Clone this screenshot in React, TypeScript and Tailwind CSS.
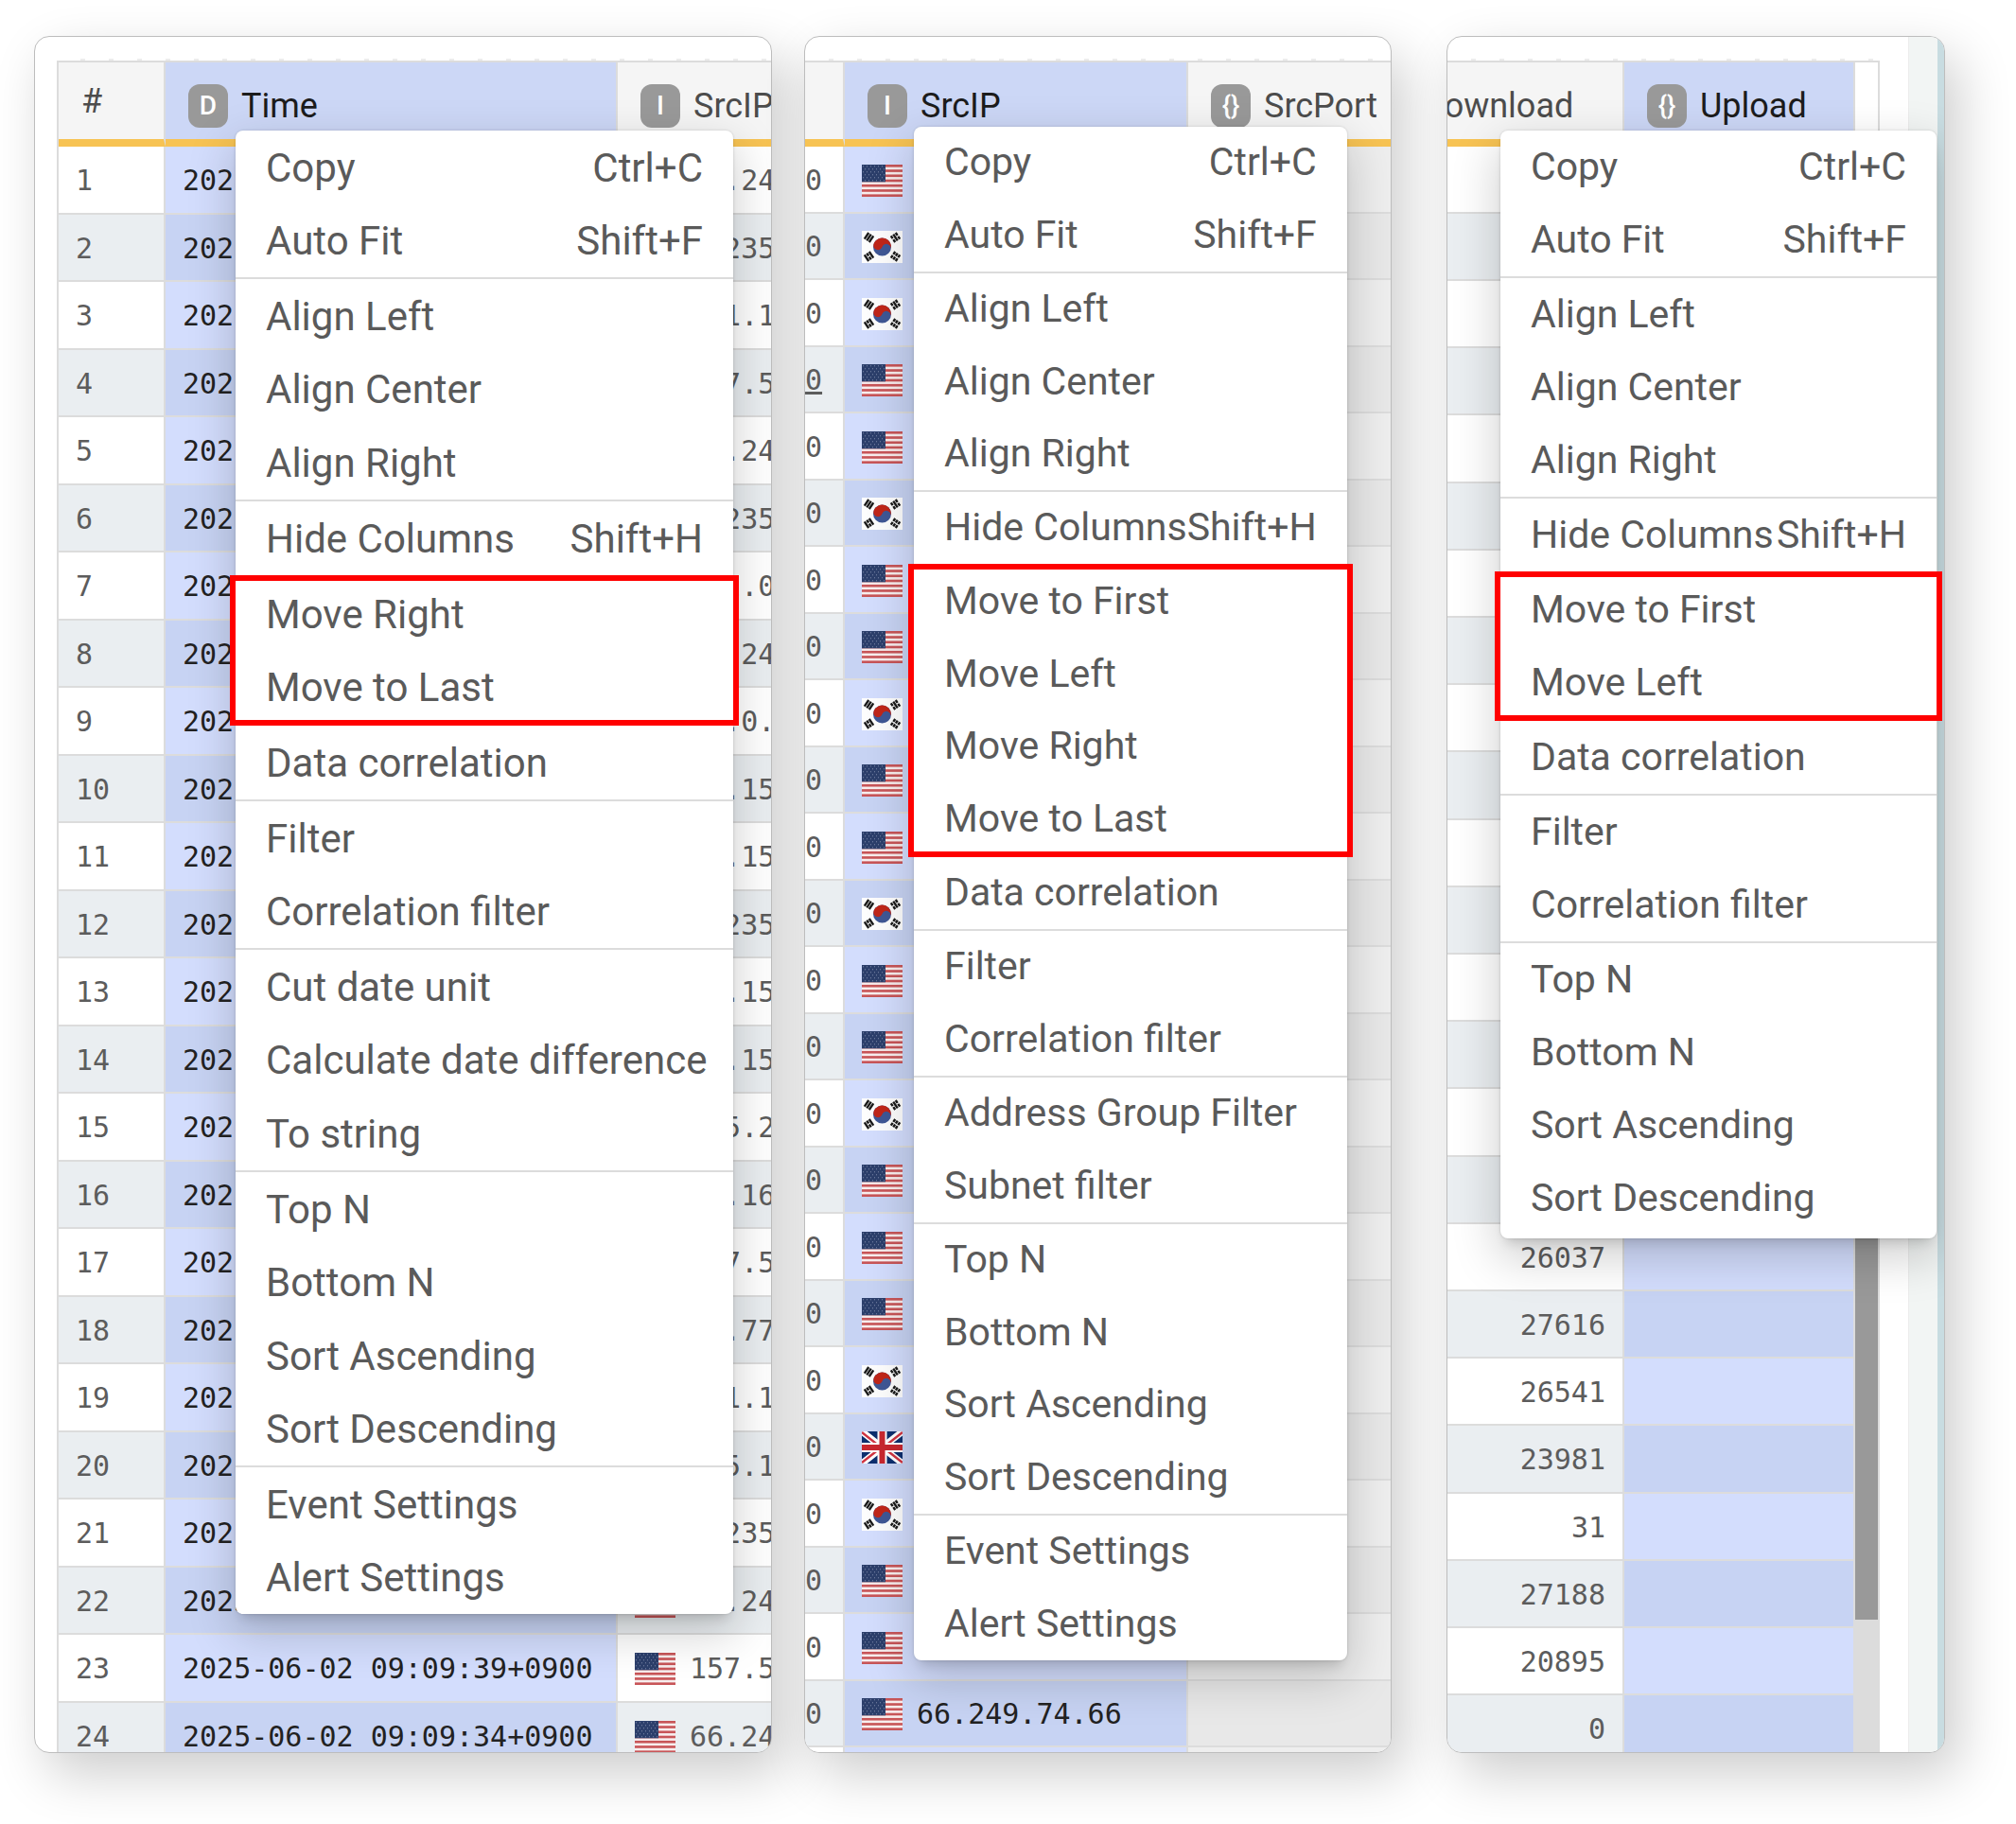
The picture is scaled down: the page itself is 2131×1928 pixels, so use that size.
import type { ReactNode } from 'react'
import clsx from 'clsx'

type Item = { label: string; keys?: string }
type Group = { items: Item[]; marked?: boolean }

const edit: Group = {
  items: [
    { label: 'Copy', keys: 'Ctrl+C' },
    { label: 'Auto Fit', keys: 'Shift+F' },
  ],
}
const align: Group = {
  items: [{ label: 'Align Left' }, { label: 'Align Center' }, { label: 'Align Right' }],
}
const hide: Group = { items: [{ label: 'Hide Columns', keys: 'Shift+H' }] }
const correlation: Group = { items: [{ label: 'Data correlation' }] }
const filter: Group = { items: [{ label: 'Filter' }, { label: 'Correlation filter' }] }
const sort: Group = {
  items: [
    { label: 'Top N' },
    { label: 'Bottom N' },
    { label: 'Sort Ascending' },
    { label: 'Sort Descending' },
  ],
}
const settings: Group = { items: [{ label: 'Event Settings' }, { label: 'Alert Settings' }] }

const timeMenu: Group[] = [
  edit,
  align,
  hide,
  { marked: true, items: [{ label: 'Move Right' }, { label: 'Move to Last' }] },
  correlation,
  filter,
  {
    items: [
      { label: 'Cut date unit' },
      { label: 'Calculate date difference' },
      { label: 'To string' },
    ],
  },
  sort,
  settings,
]

const ipMenu: Group[] = [
  edit,
  align,
  hide,
  {
    marked: true,
    items: [
      { label: 'Move to First' },
      { label: 'Move Left' },
      { label: 'Move Right' },
      { label: 'Move to Last' },
    ],
  },
  correlation,
  filter,
  { items: [{ label: 'Address Group Filter' }, { label: 'Subnet filter' }] },
  sort,
  settings,
]

const uploadMenu: Group[] = [
  edit,
  align,
  hide,
  { marked: true, items: [{ label: 'Move to First' }, { label: 'Move Left' }] },
  correlation,
  filter,
  sort,
]

const rows = [
  { flag: 'us', ip: '66.24' },
  { flag: 'kr', ip: '1.235.' },
  { flag: 'kr', ip: '121.1' },
  { flag: 'us', ip: '157.5' },
  { flag: 'us', ip: '66.24' },
  { flag: 'kr', ip: '1.235.' },
  { flag: 'us', ip: '172.0' },
  { flag: 'us', ip: '66.24' },
  { flag: 'kr', ip: '14.0.' },
  { flag: 'us', ip: '40.15' },
  { flag: 'us', ip: '40.15' },
  { flag: 'kr', ip: '1.235.' },
  { flag: 'us', ip: '40.15' },
  { flag: 'us', ip: '40.15' },
  { flag: 'kr', ip: '125.2' },
  { flag: 'us', ip: '40.16' },
  { flag: 'us', ip: '157.5' },
  { flag: 'us', ip: '40.77' },
  { flag: 'kr', ip: '121.1' },
  { flag: 'gb', ip: '185.1' },
  { flag: 'kr', ip: '1.235.' },
  { flag: 'us', ip: '66.24' },
  { flag: 'us', ip: '157.5' },
  { flag: 'us', ip: '66.24' },
]

const times: Record<number, string> = {
  21: '2025',
  22: '2025-06-02 09:09:39+0900',
  23: '2025-06-02 09:09:34+0900',
}

const downloads: Record<number, string> = {
  16: '26037',
  17: '27616',
  18: '26541',
  19: '23981',
  20: '31',
  21: '27188',
  22: '20895',
  23: '0',
}

function UsFlag() {
  return (
    <svg viewBox="0 0 43 34" className="h-[34px] w-[43px] shrink-0">
      <rect width="43" height="34" fill="#f8eeee" />
      {[0, 2, 4, 6, 8, 10, 12].map((n) => (
        <rect key={n} y={(n * 34) / 13} width="43" height={34 / 13} fill="#c85558" />
      ))}
      <rect width="25" height="18.3" fill="#2c3f6b" />
      {[2, 5, 8, 11, 14, 17].map((y, r) =>
        [2, 6, 10, 14, 18, 22].map((x) => (
          <circle key={`${x}-${y}`} cx={x + (r % 2) * 2 - 0.5} cy={y - 0.3} r="0.55" fill="#8f9bb8" />
        ))
      )}
    </svg>
  )
}

function Trigram({ x, y, turn, split }: { x: number; y: number; turn: number; split: number[] }) {
  return (
    <g transform={`translate(${x} ${y}) rotate(${turn})`} stroke="#1a1a1a" strokeWidth="2.4">
      {[-3, 0, 3].map((dy, n) => (
        <path key={dy} d={split[n] ? `M-4 ${dy}H-.6M.6 ${dy}H4` : `M-4 ${dy}H4`} />
      ))}
    </g>
  )
}

function KrFlag() {
  return (
    <svg viewBox="0 0 43 34" className="h-[34px] w-[43px] shrink-0">
      <rect width="43" height="34" fill="#fdfdfd" />
      <circle cx="21.5" cy="17" r="9.5" fill="#3f5795" />
      <path
        d="M12 17a9.5 9.5 0 0 1 19 0a4.75 4.75 0 0 0-9.5 0a4.75 4.75 0 0 1-9.5 0z"
        fill="#c02619"
        transform="rotate(20 21.5 17)"
      />
      <Trigram x={7.5} y={7} turn={-56} split={[0, 0, 0]} />
      <Trigram x={35.5} y={7} turn={56} split={[1, 0, 1]} />
      <Trigram x={7.5} y={27} turn={56} split={[0, 1, 0]} />
      <Trigram x={35.5} y={27} turn={-56} split={[1, 1, 1]} />
    </svg>
  )
}

function GbFlag() {
  return (
    <svg viewBox="0 0 43 34" className="h-[34px] w-[43px] shrink-0">
      <rect width="43" height="34" fill="#0d2f6e" />
      <path d="M0 0L43 34M43 0L0 34" stroke="#fff" strokeWidth="7" />
      <path d="M0 1L21 17.5M22 16.5L43 33M43 1L22 17.5M21 16.5L0 33" stroke="#cf3340" strokeWidth="2.4" />
      <path d="M21.5 0V34M0 17H43" stroke="#fff" strokeWidth="10" />
      <path d="M21.5 0V34M0 17H43" stroke="#c8272f" strokeWidth="6" />
    </svg>
  )
}

function Flag({ code }: { code: string }) {
  if (code === 'kr') return <KrFlag />
  if (code === 'gb') return <GbFlag />
  return <UsFlag />
}

function Menu({ groups, className, itemClass }: { groups: Group[]; className: string; itemClass: string }) {
  return (
    <div
      role="menu"
      className={clsx(
        'absolute z-10 rounded-lg bg-white whitespace-nowrap text-[#5a5a5a]',
        'shadow-[0_0_2px_1px_rgba(0,0,0,0.08),0_10px_12px_-6px_rgba(0,0,0,0.14),0_18px_48px_4px_rgba(0,0,0,0.18)]',
        className
      )}
    >
      {groups.map((group, i) => (
        <div key={i} role="group" className={clsx('relative', i > 0 && 'border-t-2 border-[#dcdcdc]')}>
          {group.items.map((item) => (
            <button
              key={item.label}
              role="menuitem"
              type="button"
              className={clsx('flex w-full items-center justify-between px-8', itemClass)}
            >
              <span>{item.label}</span>
              {item.keys && <span>{item.keys}</span>}
            </button>
          ))}
          {group.marked && (
            <div className="pointer-events-none absolute -inset-x-1.5 -inset-y-0.5 z-10 border-6 border-[#ff0000]" />
          )}
        </div>
      ))}
    </div>
  )
}

function Head({ badge, title, active }: { badge?: string; title: string; active?: boolean }) {
  return (
    <th
      className={clsx(
        'h-[89px] border-r-2 border-r-[#dcdcdc] border-b-8 border-b-[#f7c353] px-6 py-0 text-left text-4xl font-normal',
        active ? 'bg-[#ccd7f6] text-[#1c1c1c]' : 'bg-[#f5f5f5] text-[#4c4c4c]'
      )}
    >
      {badge ? (
        <span className="flex items-center gap-3.5 pt-2.5">
          <span className="flex h-[46px] w-[42px] shrink-0 items-center justify-center rounded-xl bg-[#999] text-[28px] leading-none font-medium text-white">
            {badge}
          </span>
          {title}
        </span>
      ) : (
        title
      )}
    </th>
  )
}

function Cell({ active, off, children, className }: { active?: boolean; off?: boolean; children?: ReactNode; className?: string }) {
  return (
    <td
      className={clsx(
        'border-r-2 border-b-2 border-[#dcdcdc] px-[18px] pt-0.5 pb-0',
        active && 'bg-[#d3ddfd] text-[#222] group-even:bg-[#c7d3f3]',
        off && 'bg-[#eee] group-even:bg-[#e8e8e8]',
        !active && !off && 'bg-white text-[#5c5c5c] group-even:bg-[#eaeef1]',
        className
      )}
    >
      {children}
    </td>
  )
}

// row of faint ticks that runs over the top edge of every grid
function Ticks() {
  return <div className="h-0.5 bg-[repeating-linear-gradient(90deg,transparent_0_25px,#ececec_25px_30px)]" />
}

const panel =
  'relative min-w-0 basis-0 overflow-hidden rounded-2xl border border-[#bdbdbd] bg-white shadow-[14px_22px_56px_rgba(0,0,0,0.2)]'
const table =
  'shrink-0 table-fixed border-separate border-spacing-0 border-t-2 border-[#dcdcdc] text-left'
const mono = "font-['DejaVu_Sans_Mono',monospace] text-[30px] leading-none whitespace-nowrap"

export default function App() {
  return (
    <main className="flex h-screen gap-[34px] overflow-hidden bg-white pt-[38px] pr-[75px] pb-[75px] pl-9 font-[Roboto,sans-serif]">
      <section className={clsx(panel, 'grow-[755] pt-[23px] pl-[23px]')}>
        <Ticks />
        <table className={clsx(table, 'w-[893px] border-l-2')}>
          <colgroup>
            <col className="w-[113px]" />
            <col className="w-[478px]" />
            <col className="w-[300px]" />
          </colgroup>
          <thead>
            <tr>
              <Head title="#" />
              <Head badge="D" title="Time" active />
              <Head badge="I" title="SrcIP" />
            </tr>
          </thead>
          <tbody className={mono}>
            {rows.map((row, i) => (
              <tr key={i} className="group odd:h-[72px] even:h-[71px]">
                <Cell>{i + 1}</Cell>
                <Cell active>{times[i] ?? '202'}</Cell>
                <Cell>
                  <span className="flex items-center gap-[15px]">
                    <Flag code={row.flag} />
                    {row.ip}
                  </span>
                </Cell>
              </tr>
            ))}
          </tbody>
        </table>
        <Menu
          groups={timeMenu}
          itemClass="text-[42px] odd:h-[78px] even:h-[77px]"
          className="top-[99px] left-[212px] w-[526px]"
        />
      </section>

      <section className={clsx(panel, 'grow-[619] pt-[23px]')}>
        <Ticks />
        <table className={clsx(table, 'w-[705px]')}>
          <colgroup>
            <col className="w-[42px]" />
            <col className="w-[363px]" />
            <col className="w-[300px]" />
          </colgroup>
          <thead>
            <tr>
              <Head title="" />
              <Head badge="I" title="SrcIP" active />
              <Head badge="{}" title="SrcPort" />
            </tr>
          </thead>
          <tbody className={mono}>
            {rows.map((row, i) => (
              <tr key={i} className="group odd:h-[71px] even:h-[70px]">
                <Cell className="pl-0!">
                  <span className={clsx(i === 3 && 'underline')}>0</span>
                </Cell>
                <Cell active>
                  <span className="flex items-center gap-[15px]">
                    <Flag code={row.flag} />
                    {i === 23 && '66.249.74.66'}
                  </span>
                </Cell>
                <Cell off />
              </tr>
            ))}
            <tr className="group h-[71px]">
              <Cell />
              <Cell active />
              <Cell off />
            </tr>
          </tbody>
        </table>
        <Menu
          groups={ipMenu}
          itemClass="text-[41px] odd:h-[76px] even:h-[77px]"
          className="top-[95px] left-[115px]"
        />
      </section>

      <section className={clsx(panel, 'ml-6 flex grow-[525]')}>
        <div className="min-w-0 flex-1 pt-[23px]">
          <div className="mr-[30px]">
            <Ticks />
          </div>
          <div className="flex h-full justify-end pr-[30px]">
            <table className={clsx(table, 'h-fit w-[538px]')}>
              <colgroup>
                <col className="w-[294px]" />
                <col className="w-[244px]" />
              </colgroup>
              <thead>
                <tr>
                  <Head badge="{}" title="Download" />
                  <Head badge="{}" title="Upload" active />
                </tr>
              </thead>
              <tbody className={mono}>
                {rows.map((_, i) => (
                  <tr key={i} className="group h-[71px] nth-[5n]:h-[72px]">
                    <Cell className="text-right">{downloads[i]}</Cell>
                    <Cell active />
                  </tr>
                ))}
              </tbody>
            </table>
            <div className="flex w-[26px] shrink-0 flex-col border-t-2 border-r-2 border-[#dcdcdc]">
              <div className="h-[89px]" />
              <div className="flex-1 bg-[#dcdcdc]">
                <div className="h-11/12 bg-[#999]" />
              </div>
            </div>
          </div>
        </div>
        <div className="w-[31px] shrink-0 border-l border-[#ececec] bg-[#f2f5f4]" />
        <div className="w-[7px] shrink-0 bg-[#c8dce1]" />
        <Menu
          groups={uploadMenu}
          itemClass="text-[41px] h-[77px]"
          className="top-[99px] right-2 min-w-[461px] pb-1"
        />
      </section>
    </main>
  )
}
